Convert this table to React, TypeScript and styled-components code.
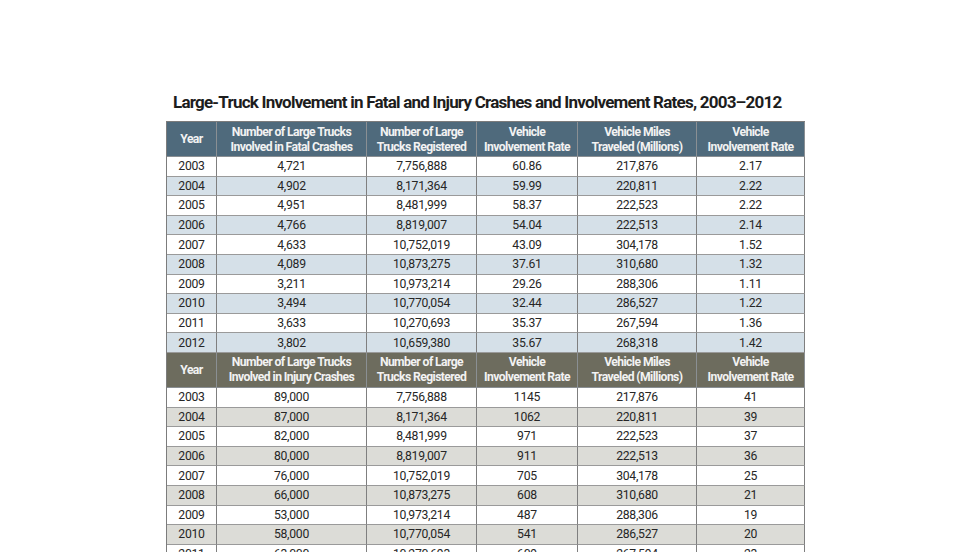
import React from "react";
import styled, { createGlobalStyle } from "styled-components";

const Global = createGlobalStyle`
  html, body { margin: 0; padding: 0; background: #ffffff; }
  body { font-family: Roboto, "Liberation Sans", Arial, sans-serif; }
`;

const Page = styled.div`
  width: 980px;
  height: 552px;
  overflow: hidden;
  padding-top: 92px;
  box-sizing: border-box;
`;

const Wrap = styled.div`
  margin-left: 166px;
  width: 639px;
`;

const Title = styled.h1`
  margin: 0 0 8px 0;
  padding-left: 7px;
  font-family: Roboto, "Liberation Sans", Arial, sans-serif;
  font-weight: 700;
  font-size: 17px;
  letter-spacing: -0.78px;
  line-height: 21px;
  color: #1d1d1d;
  white-space: nowrap;
`;

const Table = styled.div`
  border-left: 1px solid #7c7c7c;
  border-top: 1px solid #7c7c7c;
`;

type Tone = "blue" | "olive";

const headerBg: Record<Tone, string> = { blue: "#4f6a7c", olive: "#6d6c5e" };
const altBg: Record<Tone, string> = { blue: "#d5e0e8", olive: "#dcdcd7" };

const Row = styled.div<{ $bg: string; $h: number }>`
  display: grid;
  grid-template-columns: 50px 150px 110px 101px 119px 108px;
  height: ${(p) => p.$h}px;
  background: ${(p) => p.$bg};
`;

const HeadCell = styled.div`
  box-sizing: border-box;
  border-right: 1px solid #8a8f93;
  border-bottom: 1px solid #8a8f93;
  display: flex;
  align-items: center;
  justify-content: center;
  text-align: center;
  white-space: nowrap;
  color: #f2f2f2;
  font-weight: 700;
  font-size: 12.2px;
  letter-spacing: -0.6px;
  line-height: 15px;
  padding-top: 1px;
`;

const Cell = styled.div`
  box-sizing: border-box;
  border-right: 1px solid #7f7f7f;
  border-bottom: 1px solid #9a9a9a;
  display: flex;
  align-items: center;
  justify-content: center;
  white-space: nowrap;
  color: #262626;
  font-size: 12.2px;
  letter-spacing: -0.25px;
  line-height: 14px;
`;

const fatal: string[][] = [
  ["2003", "4,721", "7,756,888", "60.86", "217,876", "2.17"],
  ["2004", "4,902", "8,171,364", "59.99", "220,811", "2.22"],
  ["2005", "4,951", "8,481,999", "58.37", "222,523", "2.22"],
  ["2006", "4,766", "8,819,007", "54.04", "222,513", "2.14"],
  ["2007", "4,633", "10,752,019", "43.09", "304,178", "1.52"],
  ["2008", "4,089", "10,873,275", "37.61", "310,680", "1.32"],
  ["2009", "3,211", "10,973,214", "29.26", "288,306", "1.11"],
  ["2010", "3,494", "10,770,054", "32.44", "286,527", "1.22"],
  ["2011", "3,633", "10,270,693", "35.37", "267,594", "1.36"],
  ["2012", "3,802", "10,659,380", "35.67", "268,318", "1.42"],
];

const injury: string[][] = [
  ["2003", "89,000", "7,756,888", "1145", "217,876", "41"],
  ["2004", "87,000", "8,171,364", "1062", "220,811", "39"],
  ["2005", "82,000", "8,481,999", "971", "222,523", "37"],
  ["2006", "80,000", "8,819,007", "911", "222,513", "36"],
  ["2007", "76,000", "10,752,019", "705", "304,178", "25"],
  ["2008", "66,000", "10,873,275", "608", "310,680", "21"],
  ["2009", "53,000", "10,973,214", "487", "288,306", "19"],
  ["2010", "58,000", "10,770,054", "541", "286,527", "20"],
  ["2011", "63,000", "10,270,693", "609", "267,594", "23"],
  ["2012", "63,000", "10,659,380", "594", "268,318", "22"],
];

const Section: React.FC<{ tone: Tone; second: string; rows: string[][] }> = ({ tone, second, rows }) => {
  const heads: React.ReactNode[] = [
    "Year",
    <>Number of Large Trucks<br />{second}</>,
    <>Number of Large<br />Trucks Registered</>,
    <>Vehicle<br />Involvement Rate</>,
    <>Vehicle Miles<br />Traveled (Millions)</>,
    <>Vehicle<br />Involvement Rate</>,
  ];
  return (
    <>
      <Row $bg={headerBg[tone]} $h={35}>
        {heads.map((h, i) => (
          <HeadCell key={i}>{h}</HeadCell>
        ))}
      </Row>
      {rows.map((r, ri) => (
        <Row key={ri} $bg={ri % 2 === 1 ? altBg[tone] : "#ffffff"} $h={19.6}>
          {r.map((c, ci) => (
            <Cell key={ci}>{c}</Cell>
          ))}
        </Row>
      ))}
    </>
  );
};

export default function App() {
  return (
    <Page>
      <Global />
      <Wrap>
        <Title>Large-Truck Involvement in Fatal and Injury Crashes and Involvement Rates, 2003–2012</Title>
        <Table>
          <Section tone="blue" second="Involved in Fatal Crashes" rows={fatal} />
          <Section tone="olive" second="Involved in Injury Crashes" rows={injury} />
        </Table>
      </Wrap>
    </Page>
  );
}
